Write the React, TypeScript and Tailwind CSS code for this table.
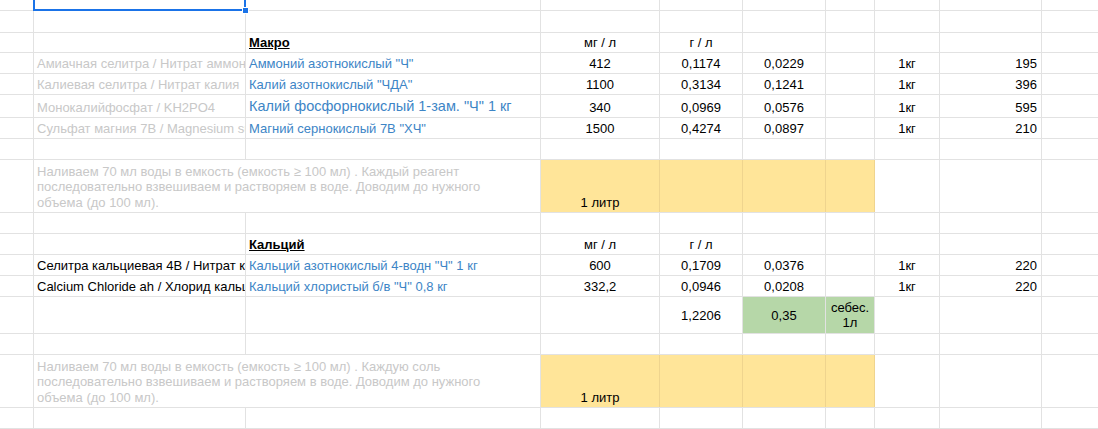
import React from "react";

// column widths (each includes its right grid line)
const colW = [
  "w-[34px]",
  "w-[212px]",
  "w-[295px]",
  "w-[119px]",
  "w-[83px]",
  "w-[83px]",
  "w-[49px]",
  "w-[65px]",
  "w-[102px]",
];

type CellProps = {
  w: string;
  middle?: boolean;
  children?: React.ReactNode;
  className?: string;
};

function Cell({ w, middle, children, className = "" }: CellProps) {
  return (
    <div
      className={`${w} shrink-0 h-full flex ${middle ? "items-center" : "items-end pb-[2px]"} px-[3px] overflow-hidden whitespace-nowrap border-r border-[#e2e2e2] ${className}`}
    >
      {children}
    </div>
  );
}

function Row({ h, children }: { h: string; children?: React.ReactNode }) {
  return (
    <div className={`${h} flex border-b border-[#e2e2e2]`}>
      {children}
      <div className="flex-1" />
    </div>
  );
}

function EmptyRow({ h }: { h: string }) {
  return (
    <Row h={h}>
      {colW.map((w, i) => (
        <Cell key={i} w={w} />
      ))}
    </Row>
  );
}

type Reagent = {
  name: string;
  nameTone: "gray" | "black";
  item: string;
  big?: boolean;
  mg: string;
  g: string;
  c: string;
  pack: string;
  price: string;
};

const macro: Reagent[] = [
  { name: "Амиачная селитра / Нитрат аммония", nameTone: "gray", item: 'Аммоний азотнокислый "Ч"', mg: "412", g: "0,1174", c: "0,0229", pack: "1кг", price: "195" },
  { name: "Калиевая селитра / Нитрат калия", nameTone: "gray", item: 'Калий азотнокислый "ЧДА"', mg: "1100", g: "0,3134", c: "0,1241", pack: "1кг", price: "396" },
  { name: "Монокалийфосфат / KH2PO4", nameTone: "gray", item: 'Калий фосфорнокислый 1-зам. "Ч" 1 кг', big: true, mg: "340", g: "0,0969", c: "0,0576", pack: "1кг", price: "595" },
  { name: "Сульфат магния 7В / Magnesium sulfate", nameTone: "gray", item: 'Магний сернокислый 7В "ХЧ"', mg: "1500", g: "0,4274", c: "0,0897", pack: "1кг", price: "210" },
];

const calcium: Reagent[] = [
  { name: "Селитра кальциевая 4В / Нитрат кальция", nameTone: "black", item: 'Кальций азотнокислый 4-водн "Ч" 1 кг', mg: "600", g: "0,1709", c: "0,0376", pack: "1кг", price: "220" },
  { name: "Calcium Chloride ah / Хлорид кальция", nameTone: "black", item: 'Кальций хлористый б/в "Ч" 0,8 кг', mg: "332,2", g: "0,0946", c: "0,0208", pack: "1кг", price: "220" },
];

function ReagentRow({ r }: { r: Reagent }) {
  return (
    <Row h={r.big ? "h-[23px]" : "h-[21px]"}>
      <Cell w={colW[0]} />
      <Cell w={colW[1]} className={r.nameTone === "gray" ? "text-[#c8c8c8]" : "text-black"}>
        {r.name}
      </Cell>
      <Cell w={colW[2]} className={`text-[#3d85c6] ${r.big ? "text-[14.5px] leading-[17px]" : ""}`}>
        {r.item}
      </Cell>
      <Cell w={colW[3]} className="justify-center">{r.mg}</Cell>
      <Cell w={colW[4]} className="justify-center">{r.g}</Cell>
      <Cell w={colW[5]} className="justify-center">{r.c}</Cell>
      <Cell w={colW[6]} />
      <Cell w={colW[7]} className="justify-center">{r.pack}</Cell>
      <Cell w={colW[8]} className="justify-end pr-[4px]">{r.price}</Cell>
    </Row>
  );
}

function HeaderRow({ title, h }: { title: string; h: string }) {
  return (
    <Row h={h}>
      <Cell w={colW[0]} />
      <Cell w={colW[1]} />
      <Cell w={colW[2]} className="font-bold underline">{title}</Cell>
      <Cell w={colW[3]} className="justify-center">мг / л</Cell>
      <Cell w={colW[4]} className="justify-center">г / л</Cell>
      <Cell w={colW[5]} />
      <Cell w={colW[6]} />
      <Cell w={colW[7]} />
      <Cell w={colW[8]} />
    </Row>
  );
}

function InstructionRow({ lines }: { lines: string[] }) {
  const yellow = "bg-[#ffe599] border-[#efd48e]";
  return (
    <Row h="h-[53px]">
      <Cell w={colW[0]} />
      <div className="w-[507px] shrink-0 h-full flex flex-col justify-end pb-[2px] px-[3px] text-[#c8c8c8] leading-[15.5px] whitespace-nowrap border-r border-[#e2e2e2]">
        {lines.map((l, i) => (
          <span key={i}>{l}</span>
        ))}
      </div>
      <Cell w={colW[3]} className={`justify-center ${yellow}`}>1 литр</Cell>
      <Cell w={colW[4]} className={yellow} />
      <Cell w={colW[5]} className={yellow} />
      <Cell w={colW[6]} className={yellow} />
      <Cell w={colW[7]} />
      <Cell w={colW[8]} />
    </Row>
  );
}

export default function App() {
  return (
    <div className="relative w-[1098px] h-[429px] overflow-hidden bg-white text-black text-[13px] leading-[15px] font-['Liberation_Sans',Arial,sans-serif]">
      <EmptyRow h="h-[11px]" />
      <EmptyRow h="h-[22px]" />
      <HeaderRow title="Макро" h="h-[20px]" />
      {macro.map((r) => (
        <ReagentRow key={r.item} r={r} />
      ))}
      <EmptyRow h="h-[21px]" />
      <InstructionRow
        lines={[
          "Наливаем 70 мл воды в емкость (емкость ≥ 100 мл) . Каждый реагент",
          "последовательно взвешиваем и растворяем в воде. Доводим до нужного",
          "объема (до 100 мл).",
        ]}
      />
      <EmptyRow h="h-[21px]" />
      <HeaderRow title="Кальций" h="h-[21px]" />
      {calcium.map((r) => (
        <ReagentRow key={r.item} r={r} />
      ))}

      {/* totals */}
      <Row h="h-[37px]">
        <Cell w={colW[0]} />
        <Cell w={colW[1]} />
        <Cell w={colW[2]} />
        <Cell w={colW[3]} />
        <Cell w={colW[4]} middle className="justify-center">1,2206</Cell>
        <Cell w={colW[5]} middle className="justify-center bg-[#b6d7a8] border-[#a8ca99]">0,35</Cell>
        <Cell w={colW[6]} middle className="justify-center bg-[#b6d7a8] border-[#a8ca99] whitespace-normal text-center px-0">
          <span>
            себес.
            <br />
            1л
          </span>
        </Cell>
        <Cell w={colW[7]} />
        <Cell w={colW[8]} />
      </Row>
      <EmptyRow h="h-[21px]" />
      <InstructionRow
        lines={[
          "Наливаем 70 мл воды в емкость (емкость ≥ 100 мл) . Каждую соль",
          "последовательно взвешиваем и растворяем в воде. Доводим до нужного",
          "объема (до 100 мл).",
        ]}
      />
      <EmptyRow h="h-[21px]" />
      <EmptyRow h="h-[21px]" />

      {/* active cell selection */}
      <div className="absolute left-[33px] top-0 w-[213px] h-[11px] border-x-2 border-b-2 border-[#1a73e8]" />
      <div className="absolute left-[242px] top-[7px] w-[7px] h-[7px] bg-[#1a73e8] border border-white" />
    </div>
  );
}
